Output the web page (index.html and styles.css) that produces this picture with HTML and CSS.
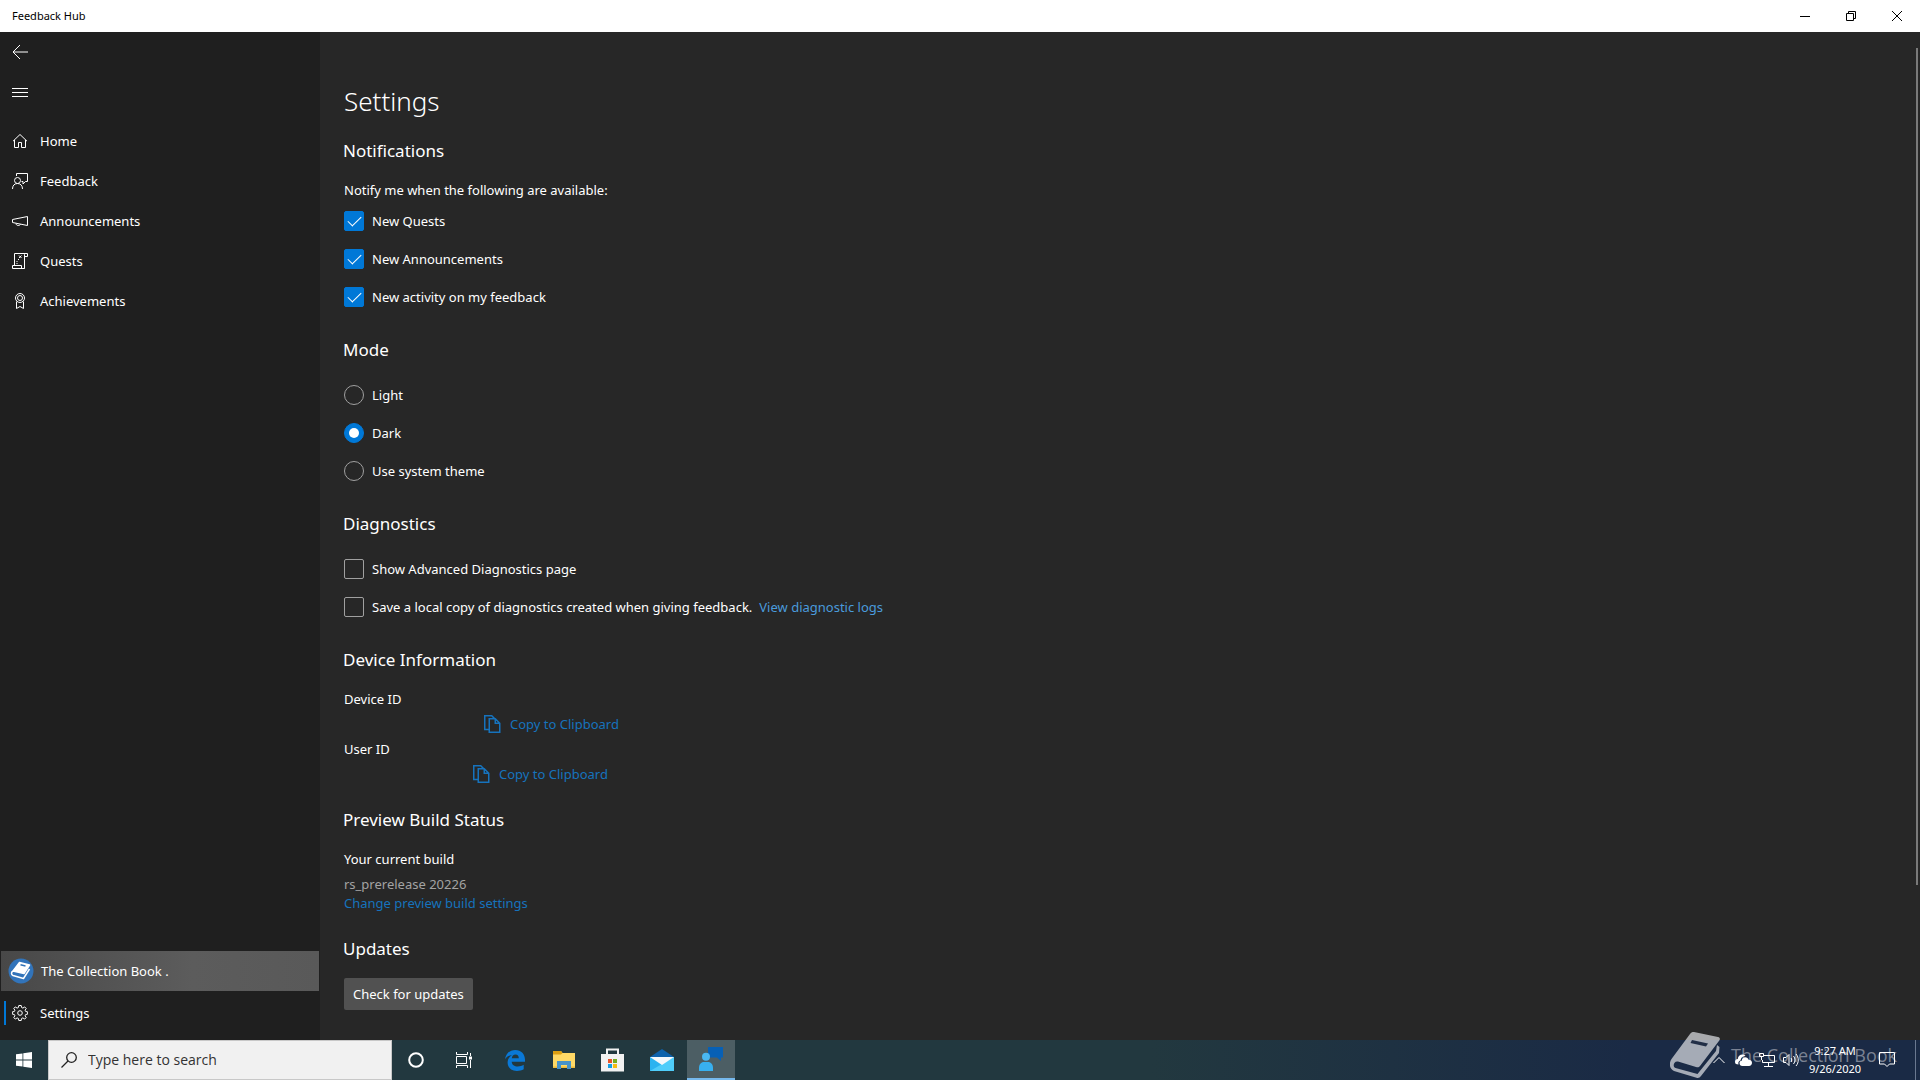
FILE: index.html
```html
<!DOCTYPE html>
<html lang="en">
	<head>
		<meta charset="UTF-8">
		<title>Feedback Hub</title>
		<link rel="stylesheet" href="styles.css">
	</head>
	<body>
		<header class="titlebar">
			<span class="titlebar-name">Feedback Hub</span>
			<button type="button" class="win-btn" aria-label="Minimize">
				<svg width="10" height="10" viewBox="0 0 10 10"><path d="M0 5.5h10" /></svg>
			</button>
			<button type="button" class="win-btn" aria-label="Restore">
				<svg width="10" height="10" viewBox="0 0 10 10"><path d="M.5 2.5h7v7h-7zM2.5 2.5v-2h7v7h-2" /></svg>
			</button>
			<button type="button" class="win-btn" aria-label="Close">
				<svg width="10" height="10" viewBox="0 0 10 10"><path d="M0 0l10 10M10 0L0 10" /></svg>
			</button>
		</header>

		<div class="app">
			<nav class="sidebar">
				<button type="button" class="nav-item" aria-label="Back">
					<svg class="icon" width="16" height="16" viewBox="0 0 16 16"><path d="M16 8H1M8 1L1 8l7 7" /></svg>
				</button>
				<button type="button" class="nav-item" aria-label="Menu">
					<svg class="icon" width="16" height="16" viewBox="0 0 16 16"><path d="M0 4.5h16M0 8.5h16M0 12.5h16" /></svg>
				</button>
				<ul class="nav-list">
					<li><a href="#" class="nav-item">
						<svg class="icon" width="16" height="16" viewBox="0 0 16 16"><path d="M1 8.200L8 1.500l7 6.700M2.500 7v7.500h4v-5h3v5h4V7" /></svg>
						Home
					</a></li>
					<li><a href="#" class="nav-item">
						<svg class="icon" width="16" height="16" viewBox="0 0 16 16"><path d="M4.500 3V.5h11v8h-2L11 11V8.500h-1.500" /><circle cx="5.500" cy="7.500" r="3" /><path d="M.5 16c0-3.500 2-5.500 5-5.500s5 2 5 5.500" /></svg>
						Feedback
					</a></li>
					<li><a href="#" class="nav-item">
						<svg class="icon" width="16" height="16" viewBox="0 0 16 16"><path d="M.5 6.500L15.500 3.500v9L.5 9.500zM4 10.500c0 2.500 4 2.500 4.500.8" /></svg>
						Announcements
					</a></li>
					<li><a href="#" class="nav-item">
						<svg class="icon" width="16" height="16" viewBox="0 0 16 16"><path d="M2.500 12.500V.5h13v3h-3M12.500 15.500V1.500c0-.6.400-1 1-1M.5 12.500h9v3h3M.5 12.500v3h12M7 2.500l2.500 2.500M9.500 2.500L7 5M6 6.500h1M4.500 8.500h1M4.500 10.500h1" /></svg>
						Quests
					</a></li>
					<li><a href="#" class="nav-item">
						<svg class="icon" width="16" height="16" viewBox="0 0 16 16"><circle cx="8" cy="5" r="4.500" /><circle cx="8" cy="5" r="2.500" /><path d="M4.500 8.500v7L8 13.500l3.500 2v-7" /></svg>
						Achievements
					</a></li>
				</ul>

				<div class="nav-bottom">
					<a href="#" class="account">
						<svg width="26" height="26" viewBox="0 0 26 26">
							<circle cx="13" cy="13" r="12.500" fill="#3274ba" />
							<path d="M11.500 4.500l10 2.500-5.500 8.500L5 13zM5 13c-2 1-2 3.500 0 4.500l10.500 3L21.500 11" fill="none" stroke="#fff" stroke-width="1.500" stroke-linejoin="round" />
							<path d="M11.500 4.500l10 2.500-5.500 8.500L5 13z" fill="#fff" />
							<path d="M12.500 6.800l5 1.200" stroke="#3274ba" stroke-width="1.500" />
						</svg>
						The Collection Book .
					</a>
					<a href="#" class="nav-item current">
						<svg class="icon" width="16" height="16" viewBox="0 0 16 16"><circle cx="8" cy="8" r="2.300" /><path d="M6.800.5h2.400l.4 2 1.300.6 1.800-1.200 1.500 1.600-1.100 1.700.6 1.300 2 .4v2.200l-2 .4-.6 1.300 1.100 1.700-1.500 1.600-1.800-1.200-1.300.6-.4 2H6.800l-.4-2-1.300-.6-1.800 1.200-1.500-1.600 1.100-1.700-.6-1.300-2-.4V6.900l2-.4.6-1.300L1.800 3.500l1.500-1.600 1.800 1.200 1.300-.6z" /></svg>
						Settings
					</a>
				</div>
			</nav>

			<main class="content">
				<h1>Settings</h1>

				<section>
					<h2>Notifications</h2>
					<p class="intro">Notify me when the following are available:</p>
					<label class="option"><input type="checkbox" checked>New Quests</label>
					<label class="option"><input type="checkbox" checked>New Announcements</label>
					<label class="option"><input type="checkbox" checked>New activity on my feedback</label>
				</section>

				<section>
					<h2 class="before-options">Mode</h2>
					<label class="option"><input type="radio" name="mode">Light</label>
					<label class="option"><input type="radio" name="mode" checked>Dark</label>
					<label class="option"><input type="radio" name="mode">Use system theme</label>
				</section>

				<section>
					<h2 class="before-options">Diagnostics</h2>
					<label class="option"><input type="checkbox">Show Advanced Diagnostics page</label>
					<div class="option-row">
						<label class="option"><input type="checkbox">Save a local copy of diagnostics created when giving feedback.</label>
						<a href="#" class="link-light">View diagnostic logs</a>
					</div>
				</section>

				<section class="device-info">
					<h2>Device Information</h2>
					<p>Device ID</p>
					<div class="copy-row device">
						<button type="button" class="copy-btn">
							<svg width="17" height="18" viewBox="0 0 17 18"><path d="M5 14.500H.750V.750h7L11 4M5.250 3.750h6l4.500 4.500v9H5.250zM11.250 3.750v4.500h4.500" /></svg>
							Copy to Clipboard
						</button>
					</div>
					<p>User ID</p>
					<div class="copy-row user">
						<button type="button" class="copy-btn">
							<svg width="17" height="18" viewBox="0 0 17 18"><path d="M5 14.500H.750V.750h7L11 4M5.250 3.750h6l4.500 4.500v9H5.250zM11.250 3.750v4.500h4.500" /></svg>
							Copy to Clipboard
						</button>
					</div>
				</section>

				<section class="update-info">
					<h2>Preview Build Status</h2>
					<p>Your current build</p>
					<p class="build">rs_prerelease 20226</p>
					<a href="#" class="link">Change preview build settings</a>
				</section>

				<section class="update-info">
					<h2>Updates</h2>
					<button type="button" class="update-btn">Check for updates</button>
				</section>

				<section>
					<h2>About</h2>
				</section>

				<div class="scroll-thumb"></div>
			</main>
		</div>

		<footer class="taskbar">
			<button type="button" class="task-btn" aria-label="Start">
				<svg width="16" height="16" viewBox="0 0 16 16" fill="#fff"><path d="M0 2.300L6.500 1.400v6.200H0zM7.300 1.300L16 0v7.600H7.300zM0 8.400h6.500v6.200L0 13.700zM7.300 8.400H16V16l-8.700-1.300z" /></svg>
			</button>
			<label class="search">
				<svg width="16" height="16" viewBox="0 0 16 16" fill="none" stroke="#222" stroke-width="1.300"><circle cx="10.500" cy="5.500" r="4.800" /><path d="M7 9L.5 15.500" /></svg>
				<input type="text" placeholder="Type here to search" aria-label="Search">
			</label>
			<button type="button" class="task-btn" aria-label="Cortana">
				<svg width="16" height="16" viewBox="0 0 16 16" fill="none" stroke="#fff" stroke-width="2"><circle cx="8" cy="8" r="6.800" /></svg>
			</button>
			<button type="button" class="task-btn" aria-label="Task View">
				<svg width="16" height="16" viewBox="0 0 16 16" fill="none" stroke="#fff"><path d="M.5 0v2.500h11V0M.5 16v-2.500h11V16M.5 4.500h10v7H.5zM14.500 1v3M14.500 8v8" /><path d="M13 4.500h3v3h-3z" fill="#fff" stroke="none" /></svg>
			</button>
			<div class="pinned">
				<button type="button" class="task-btn" aria-label="Edge">
					<svg width="20" height="21" viewBox="0 0 20 21"><path d="M0 9.300C.8 3.500 4.900 0 10.300 0 16.400 0 20 4.300 20 9.800v2H6.700c.2 3.200 2.700 4.700 6.100 4.700 2.200 0 4.200-.6 5.900-1.700v4.500C16.900 20.400 14.500 21 11.900 21 6.300 21 2.600 17.700 2.600 12.600c0-3.300 1.600-5.900 4.400-7.300C3.900 5.300 1.500 6.800 0 9.300zM6.800 8.200h7c0-2.200-1.100-3.700-3.300-3.700S7 6 6.800 8.200z" fill="#0a78d6" /></svg>
				</button>
				<button type="button" class="task-btn" aria-label="File Explorer">
					<svg width="22" height="18" viewBox="0 0 22 18"><path d="M0 0h8l1.500 2H22v15H0z" fill="#ffd966" /><path d="M0 0h8l1.500 2L8 3.500H0z" fill="#dd9f12" /><path d="M0 15.500h22V17H0z" fill="#eebb3d" /><path d="M4 18v-8h14v8h-4v-4H8v4z" fill="#4893c9" /></svg>
				</button>
				<button type="button" class="task-btn" aria-label="Microsoft Store">
					<svg width="24" height="24" viewBox="0 0 24 24"><path d="M6 7V1.500h11V7" fill="none" stroke="#f2f2f2" stroke-width="2" /><path d="M0 6h23v17.500H0z" fill="#f2f2f2" /><path d="M7 11h4v4H7z" fill="#e8542a" /><path d="M12 11h4v4h-4z" fill="#76ae22" /><path d="M7 16h4v4H7z" fill="#159fe4" /><path d="M12 16h4v4h-4z" fill="#f8bb12" /></svg>
				</button>
				<button type="button" class="task-btn" aria-label="Mail">
					<svg width="24" height="23" viewBox="0 0 24 23"><path d="M0 8l12-8 12 8v3H0z" fill="#0d62ac" /><path d="M0 8h24v14H0z" fill="#2bb3f0" /><path d="M0 22L24 8v14z" fill="#4fcdfa" /><path d="M0 8h24l-12 8z" fill="#f4f8fb" /></svg>
				</button>
				<button type="button" class="task-btn open" aria-label="Feedback Hub">
					<svg width="24" height="24" viewBox="0 0 24 24"><path d="M9 0h15v10.500h-2V14l-4-3.500H9z" fill="#0760b5" /><circle cx="7" cy="9.700" r="4" fill="#4ab8f2" /><path d="M0 24v-3c0-3.500 2-6 5-6h4c3 0 5 2.500 5 6v3z" fill="#38b0ef" /></svg>
				</button>
			</div>

			<div class="watermark">
				<svg width="50" height="46" viewBox="0 0 50 46"><path d="M24 0l24 5c2 .6 2.300 2 1.300 3.400L30 34c-1 1.300-2.200 1.500-4 1L8 29.500c-4-1-6 5-2.500 6.500l22 6L46 19l1-6 2.500 2-.5 6L31 44c-1.200 1.700-2.600 2.200-4.500 1.700L4 39C-1 36.500-1 31 1.500 27L20 2c1-1.600 2.300-2.300 4-2z" /><path d="M22 8l16 3.500-2 3L20.500 11z" fill="#253149" /></svg>
				<span>The Collection Book</span>
			</div>

			<div class="tray">
				<button type="button" class="tray-btn" aria-label="Show hidden icons">
					<svg width="12" height="8" viewBox="0 0 12 8"><path d="M.5 7L6 1.500 11.500 7" /></svg>
				</button>
				<button type="button" class="tray-btn" aria-label="OneDrive">
					<svg width="17" height="12" viewBox="0 0 17 12"><path d="M0 8c0-2 1.200-3 2.800-3C3 2 5 .5 7.300.5c1.400 0 2.500.5 3.200 1.500C7.500 2 5.800 4 5.500 6.500 3.500 7 3 8.500 3.500 10.500 1.500 10.500 0 9.800 0 8z" fill="#fff" stroke="none" /><path d="M4.500 9c0-1.500 1-2.300 2.200-2.300C7 4.500 8.500 3.300 10.300 3.300c1.600 0 2.900 1 3.300 2.500C15.500 5.800 17 7 17 8.800S15.800 12 14 12H7.300C5.700 12 4.500 10.800 4.500 9z" fill="#fff" stroke="none" /></svg>
				</button>
				<button type="button" class="tray-btn" aria-label="Network">
					<svg width="16" height="14" viewBox="0 0 16 14"><path d="M5 2.500h10.500v7h-12V7M9.500 10v3M5 13.500h9M.5.5h4v3h-4zM2.500 4v3" /></svg>
				</button>
				<button type="button" class="tray-btn" aria-label="Volume">
					<svg width="16" height="14" viewBox="0 0 16 14"><path d="M.5 4.500h2.500l3-3v11l-3-3H.5zM8 5c1 1.300 1 2.700 0 4M10.500 3c2 2.500 2 5.500 0 8M13 1c3 3.500 3 8.500 0 12" /></svg>
				</button>
				<time class="clock" datetime="2020-09-26T09:27">9:27 AM<br>9/26/2020</time>
				<button type="button" class="tray-btn action" aria-label="Notifications">
					<svg width="16" height="16" viewBox="0 0 16 16"><path d="M.5.5h15v11.500H10.500L8 14.500 5.500 12H.5z" /></svg>
				</button>
				<div class="show-desktop"></div>
			</div>
		</footer>
	</body>
</html>
```
FILE: styles.css
```css
* {
	box-sizing: border-box;
	margin: 0;
	padding: 0;
}

body {
	display: flex;
	flex-direction: column;
	height: 100vh;
	overflow: hidden;
	background: #272727;
	color: #fff;
	font: 13px/20px "Noto Sans", "Open Sans", sans-serif;
}

ul {
	list-style: none;
}

a {
	color: inherit;
	text-decoration: none;
}

button {
	border: none;
	background: none;
	color: inherit;
	font: inherit;
}

svg {
	flex: none;
}

/* title bar */
.titlebar {
	display: flex;
	flex: none;
	align-items: center;
	height: 32px;
	background: #fff;
	color: #000;
	font-size: 11px;
}

.titlebar-name {
	flex: 1;
	padding-left: 12px;
}

.win-btn {
	display: flex;
	align-items: center;
	justify-content: center;
	width: 46px;
	height: 32px;
}

.win-btn svg {
	fill: none;
	stroke: #000;
}

.app {
	display: flex;
	flex: 1;
	min-height: 0;
}

/* left navigation */
.sidebar {
	display: flex;
	flex: none;
	flex-direction: column;
	width: 320px;
	padding-bottom: 7px;
	background: #1f1f1f;
}

.nav-item {
	display: flex;
	align-items: center;
	gap: 12px;
	width: 100%;
	height: 40px;
	padding-left: 12px;
}

.icon {
	fill: none;
	stroke: #fff;
}

.nav-list {
	margin-top: 9px;
}

.nav-bottom {
	margin-top: auto;
}

.account {
	display: flex;
	align-items: center;
	gap: 7px;
	height: 40px;
	margin: 0 1px 2px;
	padding-left: 7px;
	background: linear-gradient(90deg, #484848, #5c5c5c 60%, #595959);
}

.current {
	position: relative;
}

.current::before {
	content: "";
	position: absolute;
	left: 4px;
	top: 8px;
	width: 2px;
	height: 24px;
	background: #0078d7;
}

/* settings page */
.content {
	position: relative;
	flex: 1;
	padding: 51px 24px 0;
	overflow: hidden;
}

h1 {
	margin-bottom: 20px;
	font-size: 26px;
	font-weight: 300;
	line-height: 36px;
}

h2 {
	margin: 0 0 17px -1px;
	font-size: 17px;
	font-weight: 400;
	line-height: 24px;
}

.before-options {
	margin-bottom: 14px;
}

section {
	margin-bottom: 22px;
}

.device-info {
	margin-bottom: 19px;
}

.update-info {
	margin-bottom: 25px;
}

.intro {
	margin-bottom: 2px;
}

.option {
	display: flex;
	align-items: center;
	gap: 8px;
	height: 38px;
}

.option-row {
	display: flex;
	align-items: center;
	gap: 7px;
}

.option input {
	appearance: none;
	display: grid;
	flex: none;
	place-items: center;
	width: 20px;
	height: 20px;
	border: 1px solid #a0a0a0;
	border-radius: 2px;
}

.option input[type="radio"] {
	border-radius: 50%;
}

.option input:checked {
	border-color: #0078d7;
	background: #0078d7;
}

.option input[type="checkbox"]:checked::before {
	content: "";
	width: 12px;
	height: 6px;
	border: solid #fff;
	border-width: 0 0 1px 1px;
	transform: translateY(-2px) rotate(-45deg);
}

.option input[type="radio"]:checked::before {
	content: "";
	width: 10px;
	height: 10px;
	border-radius: 50%;
	background: #fff;
}

.link {
	display: block;
	line-height: 18px;
	color: #1673bd;
}

.link-light {
	color: #4a9bdc;
}

.copy-row {
	display: flex;
	align-items: center;
	height: 30px;
}

.device {
	padding-left: 140px;
}

.user {
	padding-left: 129px;
}

.copy-btn {
	display: flex;
	align-items: center;
	gap: 9px;
	color: #1673bd;
}

.copy-btn svg {
	fill: none;
	stroke: #1673bd;
	stroke-width: 1.5;
}

.build {
	margin-top: 5px;
	color: #a3a3a3;
}

.update-btn {
	display: block;
	height: 32px;
	padding: 0 9px;
	border-radius: 2px;
	background: #515151;
}

.scroll-thumb {
	position: absolute;
	top: 16px;
	right: 2px;
	width: 2px;
	height: 83%;
	background: #7a7a7a;
}

/* taskbar */
.taskbar {
	position: relative;
	display: flex;
	flex: none;
	height: 40px;
	background: linear-gradient(90deg, #22383f 0%, #22383f 60%, #1a2a45 85%, #1a2a45 100%);
}

.task-btn {
	display: flex;
	align-items: center;
	justify-content: center;
	width: 48px;
	height: 40px;
}

.open {
	border-bottom: 2px solid #76b9ed;
	background: #4c5e64;
}

.pinned {
	display: flex;
	gap: 1px;
	margin-left: 3px;
}

.search {
	display: flex;
	align-items: center;
	gap: 11px;
	width: 344px;
	padding: 0 12px;
	border: 1px solid #c8c8c8;
	background: #f1f1f1;
}

.search input {
	flex: 1;
	min-width: 0;
	border: none;
	background: none;
	color: #333;
	font: 14px/20px "Open Sans", "Noto Sans", sans-serif;
}

.search input::placeholder {
	color: #333;
}

.tray {
	position: relative;
	display: flex;
	align-items: center;
	margin-left: auto;
}

.tray-btn {
	display: flex;
	align-items: center;
	justify-content: center;
	width: 24px;
	height: 40px;
}

.tray-btn svg {
	fill: none;
	stroke: #fff;
}

.clock {
	width: 64px;
	font-size: 11px;
	line-height: 18px;
	text-align: center;
}

.action {
	width: 40px;
}

.show-desktop {
	width: 5px;
	height: 40px;
	margin-left: 8px;
	border-left: 1px solid #6a7890;
}

/* logo that floats behind the tray icons */
.watermark {
	position: absolute;
	right: 23px;
	bottom: 2px;
	display: flex;
	align-items: center;
	gap: 11px;
	color: #a3a8b4;
	font: 18px/24px "Open Sans", "Noto Sans", sans-serif;
	opacity: .7;
	pointer-events: none;
}

.watermark svg {
	fill: #e0e2e6;
}
```
